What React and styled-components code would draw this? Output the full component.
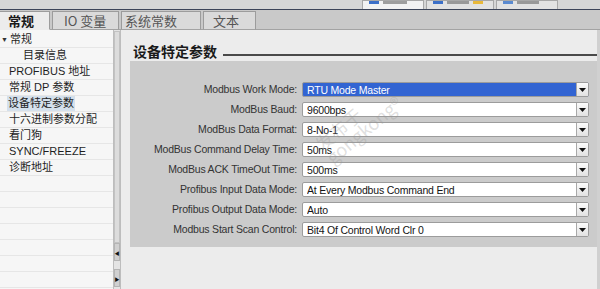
import styled, { createGlobalStyle } from "styled-components";

const GlobalStyle = createGlobalStyle`
  html, body { margin: 0; padding: 0; background: #ececec; }
  * { box-sizing: border-box; }
`;

const Window = styled.div`
  width: 600px;
  height: 289px;
  overflow: hidden;
  position: relative;
  display: flex;
  flex-direction: column;
  font-family: "Liberation Sans", "Noto Sans CJK SC", sans-serif;
  background: #ececec;
`;

const TopStrip = styled.div`
  height: 10px;
  flex: none;
  display: flex;
  align-items: flex-end;
  padding-left: 362px;
  gap: 2px;
  background: #d6d6d6;
  border-bottom: 1px solid #3c4458;
`;

const TopTab = styled.div`
  width: ${(p) => p.$w}px;
  height: 9px;
  background: ${(p) => (p.$active ? "#f2f2f2" : "#e2e2e2")};
  border: 1px solid #a8a8a8;
  border-bottom: none;
  display: flex;
  align-items: flex-start;
  padding-left: 6px;
  gap: 4px;
`;

const TopIcon = styled.span`
  width: 10px;
  height: 3px;
  background: ${(p) => p.$c};
`;

const TopText = styled.span`
  width: ${(p) => p.$w}px;
  height: 3px;
  background: #7a7a7a;
  opacity: 0.7;
`;

const TabBar = styled.div`
  height: 20px;
  flex: none;
  display: flex;
  align-items: flex-end;
  gap: 2px;
  background: #c9c9c9;
  border-bottom: 1px solid #a3a3a3;
`;

const Tab = styled.div`
  width: ${(p) => p.$w}px;
  height: 19px;
  margin-bottom: -1px;
  display: flex;
  align-items: center;
  padding-left: ${(p) => p.$pl}px;
  font-family: "Noto Sans CJK SC", "Liberation Sans", sans-serif;
  font-size: 13px;
  font-weight: ${(p) => (p.$active ? 700 : 400)};
  color: ${(p) => (p.$active ? "#1a1a1a" : "#555")};
  background: ${(p) => (p.$active ? "#ececec" : "#dadada")};
  border: 1px solid #9c9c9c;
  border-bottom: ${(p) => (p.$active ? "1px solid #ececec" : "1px solid #a3a3a3")};
  border-left: ${(p) => (p.$first ? "none" : "1px solid #9c9c9c")};
`;

const Body = styled.div`
  flex: 1;
  display: flex;
  min-height: 0;
`;

const Nav = styled.div`
  width: 113px;
  flex: none;
  background: #f6f6f6;
  padding-top: 2px;
  display: flex;
  flex-direction: column;
`;

const NavRow = styled.div`
  height: 16px;
  flex: none;
  display: flex;
  align-items: center;
  padding-left: ${(p) => p.$indent}px;
  border-bottom: 1px solid #e6e6e6;
  font-family: "Liberation Sans", "Noto Sans CJK SC", sans-serif;
  font-size: 11px;
  color: #1e1e1e;
  white-space: nowrap;
`;

const NavLabel = styled.span`
  padding: 1px 1px;
  line-height: 13px;
  background: ${(p) => (p.$selected ? "#d4e0ec" : "transparent")};
`;

const Caret = styled.span`
  font-size: 7px;
  width: 8px;
  margin-left: -7px;
  color: #333;
`;

const Scrollbar = styled.div`
  width: 8px;
  flex: none;
  background: #e4e4e4;
  border-left: 1px solid #bdbdbd;
  border-right: 1px solid #bdbdbd;
  display: flex;
  flex-direction: column;
  padding-top: 1px;
`;

const Thumb = styled.div`
  height: 212px;
  background: #dcdcdc;
  border: 1px solid #c2c2c2;
`;

const ScrollBtn = styled.div`
  height: ${(p) => p.$h}px;
  margin-top: ${(p) => p.$mt}px;
  background: #d0d0d0;
  border: 1px solid #b4b4b4;
  display: flex;
  align-items: center;
  justify-content: center;
  font-size: 5px;
  color: #111;
`;

const Content = styled.div`
  flex: 1;
  display: flex;
  flex-direction: column;
  background: #ececec;
  border-right: 3px solid #d0d0d0;
`;

const TitleRow = styled.div`
  height: 27px;
  flex: none;
  display: flex;
  align-items: flex-end;
  padding-left: 12px;
  gap: 6px;
`;

const Title = styled.h2`
  margin: 0 0 -3px 0;
  font-family: "Noto Sans CJK SC", sans-serif;
  font-size: 14px;
  font-weight: 700;
  line-height: 18px;
  color: #1a1a1a;
`;

const TitleLine = styled.div`
  flex: 1;
  height: 2px;
  margin-bottom: 1px;
  background: #4a4a4a;
`;

const ParamBox = styled.div`
  margin: 4px 0 0 9px;
  height: 186px;
  background: #cbcbcb;
  display: grid;
  grid-template-columns: 167px 287px;
  grid-auto-rows: 15px;
  column-gap: 5px;
  row-gap: 5px;
  padding-top: 21px;
  align-content: start;
  font-size: 10.5px;
  letter-spacing: -0.2px;
`;

const Label = styled.div`
  text-align: right;
  line-height: 15px;
  color: #333;
  white-space: nowrap;
`;

const Field = styled.div`
  display: flex;
  align-items: center;
  height: 15px;
  padding-left: 4px;
  background: ${(p) => (p.$selected ? "#3264d2" : "#ffffff")};
  color: ${(p) => (p.$selected ? "#ffffff" : "#141414")};
  border: 1px solid #9c9c9c;
  border-radius: 2px;
`;

const FieldText = styled.span`
  flex: 1;
  white-space: nowrap;
  overflow: hidden;
`;

const DropButton = styled.span`
  width: 12px;
  height: 13px;
  flex: none;
  background: linear-gradient(#fbfbfb, #e2e2e2);
  border-left: 1px solid #a8a8a8;
  display: flex;
  align-items: center;
  justify-content: center;
`;

const Watermark = styled.div`
  position: absolute;
  left: 312px;
  top: 140px;
  transform: rotate(-40deg);
  transform-origin: left top;
  color: rgba(150, 150, 150, 0.3);
  font-family: "Noto Sans CJK SC", sans-serif;
  font-size: 18px;
  line-height: 17px;
  pointer-events: none;
`;

const tabs = [
  { text: "常规", w: 50, pl: 8, active: true },
  { text: "IO 变量", w: 67, pl: 11 },
  { text: "系统常数", w: 80, pl: 3 },
  { text: "文本", w: 53, pl: 9 },
];

const navItems = [
  { text: "常规", indent: 8, caret: true },
  { text: "目录信息", indent: 22 },
  { text: "PROFIBUS 地址", indent: 8 },
  { text: "常规 DP 参数", indent: 8 },
  { text: "设备特定参数", indent: 7, selected: true },
  { text: "十六进制参数分配", indent: 8 },
  { text: "看门狗", indent: 8 },
  { text: "SYNC/FREEZE", indent: 8 },
  { text: "诊断地址", indent: 8 },
];

const params = [
  { label: "Modbus Work Mode:", value: "RTU Mode Master", selected: true },
  { label: "ModBus Baud:", value: "9600bps" },
  { label: "ModBus Data Format:", value: "8-No-1" },
  { label: "ModBus Command Delay Time:", value: "50ms" },
  { label: "ModBus ACK TimeOut Time:", value: "500ms" },
  { label: "Profibus Input Data Mode:", value: "At Every Modbus Command End" },
  { label: "Profibus Output Data Mode:", value: "Auto" },
  { label: "Modbus Start Scan Control:", value: "Bit4 Of Control Word Clr 0" },
];

const Arrow = () => (
  <svg width="7" height="4" viewBox="0 0 7 4">
    <path d="M0 0h7L3.5 4z" fill="#111" />
  </svg>
);

export default function App() {
  return (
    <>
      <GlobalStyle />
      <Window>
        <TopStrip>
          <TopTab $w={62} $active>
            <TopIcon $c="#3b6fc8" />
            <TopText $w={24} />
          </TopTab>
          <TopTab $w={68}>
            <TopIcon $c="#3b6fc8" />
            <TopText $w={22} />
            <TopIcon $c="#e8b83a" />
          </TopTab>
          <TopTab $w={62}>
            <TopIcon $c="#5a8ad0" />
            <TopText $w={22} />
          </TopTab>
        </TopStrip>
        <TabBar>
          {tabs.map((t, i) => (
            <Tab key={i} $w={t.w} $pl={t.pl} $active={t.active} $first={i === 0}>
              {t.text}
            </Tab>
          ))}
        </TabBar>
        <Body>
          <Nav>
            {navItems.map((item, i) => (
              <NavRow key={i} $indent={item.indent}>
                {item.caret && <Caret>▼</Caret>}
                <NavLabel $selected={item.selected}>{item.text}</NavLabel>
              </NavRow>
            ))}
            {Array.from({ length: 7 }).map((_, i) => (
              <NavRow key={"e" + i} $indent={8} />
            ))}
          </Nav>
          <Scrollbar>
            <Thumb />
            <ScrollBtn $h={18} $mt={0}>◀</ScrollBtn>
            <ScrollBtn $h={18} $mt={8}>▶</ScrollBtn>
          </Scrollbar>
          <Content>
            <TitleRow>
              <Title>设备特定参数</Title>
              <TitleLine />
            </TitleRow>
            <ParamBox>
              {params.map((p, i) => [
                <Label key={"l" + i}>{p.label}</Label>,
                <Field key={"f" + i} $selected={p.selected}>
                  <FieldText>{p.value}</FieldText>
                  <DropButton>
                    <Arrow />
                  </DropButton>
                </Field>,
              ])}
            </ParamBox>
          </Content>
        </Body>
        <Watermark>
          发布于
          <br />
          gongkong®
        </Watermark>
      </Window>
    </>
  );
}
